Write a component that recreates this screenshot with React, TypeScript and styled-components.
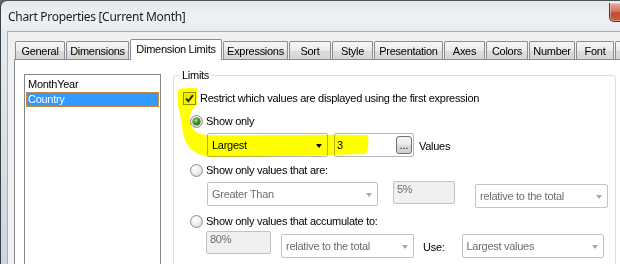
import React from 'react';
import styled, { createGlobalStyle } from 'styled-components';

const GlobalStyle = createGlobalStyle`
	html, body {
		margin: 0;
		padding: 0;
		background: #5f6b5c;
	}
	* {
		box-sizing: border-box;
	}
`;

const uiFont = `'Liberation Sans', Arial, sans-serif`;

interface TabDef {
	label: string;
	width: number;
	active?: boolean;
}

const tabs: TabDef[] = [
	{ label: 'General', width: 50 },
	{ label: 'Dimensions', width: 63 },
	{ label: 'Dimension Limits', width: 92, active: true },
	{ label: 'Expressions', width: 65 },
	{ label: 'Sort', width: 42 },
	{ label: 'Style', width: 41 },
	{ label: 'Presentation', width: 69 },
	{ label: 'Axes', width: 41 },
	{ label: 'Colors', width: 42 },
	{ label: 'Number', width: 46 },
	{ label: 'Font', width: 38 },
	{ label: '', width: 24 },
];

export default function App() {
	return (
		<>
			<GlobalStyle />
			<Window>
				<TitleBar>
					<Title>Chart Properties [Current Month]</Title>
					<CloseButton />
				</TitleBar>
				<Client>
					<TabStrip>
						{tabs.map((t, i) => (
							<Tab key={i} $width={t.width} $active={!!t.active}>
								{t.label}
							</Tab>
						))}
					</TabStrip>
					<Panel>
						<ListBox>
							<ListItem>MonthYear</ListItem>
							<ListItem $selected>Country</ListItem>
						</ListBox>
						<GroupBox>
							<Legend>Limits</Legend>
							<CheckRow>
								<CheckBox>
									<svg width="11" height="11" viewBox="0 0 11 11">
										<path d="M2 5.5 L4.3 8.2 L9 2.2" fill="none" stroke="#2b2b2b" strokeWidth="1.9" />
									</svg>
								</CheckBox>
								<Label>Restrict which values are displayed using the first expression</Label>
							</CheckRow>

							<RadioRow $mt={7}>
								<Radio $checked />
								<Label>Show only</Label>
							</RadioRow>
							<ControlRow $mt={4} $center>
								<Dropdown $width={121}>
									<span>Largest</span>
									<Arrow />
								</Dropdown>
								<EditBox $width={80} $ml={6}>
									<span>3</span>
									<DotsButton>...</DotsButton>
								</EditBox>
								<Label $ml={5} $dy={2}>Values</Label>
							</ControlRow>

							<RadioRow $mt={5}>
								<Radio />
								<Label>Show only values that are:</Label>
							</RadioRow>
							<ControlRow $mt={3}>
								<Dropdown $width={171} $disabled $dy={1}>
									<span>Greater Than</span>
									<Arrow $disabled />
								</Dropdown>
								<StaticEdit $width={62} $ml={15}>5%</StaticEdit>
								<Dropdown $width={133} $ml={20} $disabled $dy={3}>
									<span>relative to the total</span>
									<Arrow $disabled />
								</Dropdown>
							</ControlRow>

							<RadioRow $mt={5}>
								<Radio />
								<Label>Show only values that accumulate to:</Label>
							</RadioRow>
							<ControlRow $mt={2} $ml={23}>
								<StaticEdit $width={65}>80%</StaticEdit>
								<Dropdown $width={133} $ml={10} $disabled $dy={3}>
									<span>relative to the total</span>
									<Arrow $disabled />
								</Dropdown>
								<Label $ml={9} $dy={10}>Use:</Label>
								<Dropdown $width={142} $ml={17} $disabled $dy={3}>
									<span>Largest values</span>
									<Arrow $disabled />
								</Dropdown>
							</ControlRow>
						</GroupBox>
					</Panel>
				</Client>
				<Highlight viewBox="0 0 620 264" width="620" height="264">
					<path
						d="M178 90 C178 88 196 87 197 89 L197 104 C193 108 190 112 190 119 C190 127 194 133 204 135 C240 136 320 134 367 135 C369 140 369 148 366 154 C330 155 260 157 212 157 C196 156 187 148 184 137 C182 128 181 116 178 106 Z"
						fill="#ffff00"
					/>
				</Highlight>
			</Window>
		</>
	);
}

const Window = styled.div`
	position: relative;
	width: 620px;
	height: 264px;
	overflow: hidden;
	display: flex;
	flex-direction: column;
	border-top: 1px solid #4b5157;
	border-left: 1px solid #3a3f44;
	border-top-left-radius: 7px;
	background: linear-gradient(to bottom, #e4e9ee 0px, #eef1f4 18px, #e6ebf0 31px, #d9e1e8 140px, #ccd6df 264px);
`;

const TitleBar = styled.div`
	height: 30px;
	flex: none;
	display: flex;
	align-items: center;
	padding-left: 7px;
`;

const Title = styled.div`
	font-family: 'Noto Sans', 'Open Sans', sans-serif;
	font-size: 12px;
	letter-spacing: -0.3px;
	color: #1b1b1b;
`;

const CloseButton = styled.div`
	flex: none;
	align-self: flex-start;
	margin-left: auto;
	margin-right: -33px;
	margin-top: 2px;
	width: 44px;
	height: 19px;
	border: 1px solid #6b2e26;
	border-top: none;
	border-radius: 0 0 5px 5px;
	background: linear-gradient(to bottom, #e9a99a 0%, #d77562 45%, #c24a34 55%, #c8604a 100%);
	box-shadow: inset 0 0 0 1px rgba(255, 255, 255, 0.35);
`;

const Client = styled.div`
	flex: 1;
	margin-left: 6px;
	display: flex;
	flex-direction: column;
	background: #f0f0f0;
	border-top: 1px solid #a7b0ba;
	border-left: 1px solid #a7b0ba;
	padding: 7px 0 0 6px;
	overflow: hidden;
`;

const TabStrip = styled.div`
	position: relative;
	z-index: 1;
	display: flex;
	align-items: flex-end;
	gap: 1px;
	height: 21px;
	margin-bottom: -1px;
	padding-left: 1px;
	flex: none;
`;

const Tab = styled.div<{ $width: number; $active: boolean }>`
	flex: none;
	width: ${(p) => p.$width}px;
	height: ${(p) => (p.$active ? 21 : 18)}px;
	margin-bottom: ${(p) => (p.$active ? 0 : 1)}px;
	border: 1px solid #898c95;
	border-bottom: none;
	border-radius: 2px 2px 0 0;
	background: ${(p) =>
		p.$active ? '#ffffff' : 'linear-gradient(to bottom, #f6f6f6 0%, #ebebeb 50%, #dcdcdc 51%, #d6d6d6 100%)'};
	font-family: ${uiFont};
	font-size: 11px;
	letter-spacing: -0.28px;
	color: #000;
	display: flex;
	align-items: center;
	justify-content: center;
	white-space: nowrap;
	padding-bottom: ${(p) => (p.$active ? 2 : 0)}px;
`;

const Panel = styled.div`
	flex: 1;
	width: 640px;
	display: flex;
	align-items: flex-start;
	gap: 12px;
	padding: 9px 0 0 9px;
	background: #ffffff;
	border: 1px solid #898c95;
`;

const ListBox = styled.div`
	flex: none;
	width: 137px;
	height: 210px;
	margin-top: 5px;
	border: 1px solid #828790;
	padding: 2px 1px;
	font-family: ${uiFont};
	font-size: 11px;
	letter-spacing: -0.28px;
`;

const ListItem = styled.div<{ $selected?: boolean }>`
	height: 15px;
	line-height: 15px;
	padding-left: 2px;
	color: ${(p) => (p.$selected ? '#ffffff' : '#000000')};
	background: ${(p) => (p.$selected ? '#3399ff' : 'transparent')};
	outline: ${(p) => (p.$selected ? '1px dotted #d99a4a' : 'none')};
	outline-offset: -1px;
`;

const GroupBox = styled.fieldset`
	flex: none;
	width: 443px;
	height: 230px;
	margin: 0;
	padding: 0 0 0 9px;
	min-width: 0;
	border: 1px solid #d5dfe5;
	border-radius: 3px;
	display: flex;
	flex-direction: column;
	align-items: flex-start;
	font-family: ${uiFont};
	font-size: 11px;
	letter-spacing: -0.28px;
`;

const Legend = styled.legend`
	margin-left: -3px;
	padding: 0 2px;
	line-height: 13px;
	color: #000;
`;

const CheckRow = styled.div`
	display: flex;
	align-items: center;
	gap: 4px;
	height: 16px;
	margin-top: 8px;
`;

const CheckBox = styled.div`
	width: 13px;
	height: 13px;
	border: 1px solid #8e8f8f;
	background: linear-gradient(135deg, #dcdcdc 0%, #f6f6f6 60%, #ffffff 100%);
	box-shadow: inset 0 0 0 1px #f4f4f4;
	display: flex;
	align-items: center;
	justify-content: center;
`;

const RadioRow = styled.div<{ $mt: number }>`
	display: flex;
	align-items: center;
	gap: 3px;
	height: 16px;
	margin-left: 7px;
	margin-top: ${(p) => p.$mt}px;
`;

const Radio = styled.div<{ $checked?: boolean }>`
	width: 13px;
	height: 13px;
	border-radius: 50%;
	border: 1px solid #8f8f8f;
	background: radial-gradient(circle at 40% 35%, #ffffff 0%, #eeeeee 45%, #c9c9c9 100%);
	display: flex;
	align-items: center;
	justify-content: center;
	&::after {
		content: '';
		display: ${(p) => (p.$checked ? 'block' : 'none')};
		width: 7px;
		height: 7px;
		border-radius: 50%;
		background: radial-gradient(circle at 40% 35%, #b7ec8a 0%, #3f9e20 40%, #185c0c 85%);
		box-shadow: 0 0 0 0.5px #2a5a1a;
	}
`;

const Label = styled.span<{ $ml?: number; $dy?: number }>`
	flex: none;
	color: #000;
	white-space: nowrap;
	margin-left: ${(p) => p.$ml ?? 0}px;
	margin-top: ${(p) => p.$dy ?? 0}px;
`;

const ControlRow = styled.div<{ $mt: number; $ml?: number; $center?: boolean }>`
	display: flex;
	align-items: ${(p) => (p.$center ? 'center' : 'flex-start')};
	margin-left: ${(p) => p.$ml ?? 24}px;
	margin-top: ${(p) => p.$mt}px;
`;

const Dropdown = styled.div<{ $width: number; $ml?: number; $dy?: number; $disabled?: boolean }>`
	flex: none;
	width: ${(p) => p.$width}px;
	height: 24px;
	margin-left: ${(p) => p.$ml ?? 0}px;
	margin-top: ${(p) => p.$dy ?? 0}px;
	border: 1px solid ${(p) => (p.$disabled ? '#c2c2c2' : '#b5b5b5')};
	border-radius: 2px;
	background: #ffffff;
	color: ${(p) => (p.$disabled ? '#6d6d6d' : '#000000')};
	display: flex;
	align-items: center;
	justify-content: space-between;
	padding: 0 5px 0 4px;
	white-space: nowrap;
`;

const Arrow = styled.span<{ $disabled?: boolean }>`
	width: 0;
	height: 0;
	border-left: 3.5px solid transparent;
	border-right: 3.5px solid transparent;
	border-top: 4px solid ${(p) => (p.$disabled ? '#a8a8a8' : '#000000')};
	margin-top: 1px;
`;

const EditBox = styled.div<{ $width: number; $ml?: number }>`
	flex: none;
	width: ${(p) => p.$width}px;
	height: 24px;
	margin-left: ${(p) => p.$ml ?? 0}px;
	border: 1px solid #b5b5b5;
	border-radius: 2px;
	background: #ffffff;
	display: flex;
	align-items: center;
	justify-content: space-between;
	padding: 0 1px 0 2px;
`;

const DotsButton = styled.div`
	width: 16px;
	height: 18px;
	margin-top: -1px;
	border: 1px solid #707070;
	border-radius: 3px;
	background: linear-gradient(to bottom, #f4f4f4 0%, #e9e9e9 50%, #dcdcdc 51%, #d0d0d0 100%);
	font-size: 10px;
	letter-spacing: 0;
	line-height: 18px;
	text-align: center;
	color: #000;
`;

const StaticEdit = styled.div<{ $width: number; $ml?: number }>`
	flex: none;
	width: ${(p) => p.$width}px;
	height: 23px;
	margin-left: ${(p) => p.$ml ?? 0}px;
	border: 1px solid #c2c2c2;
	border-radius: 2px;
	background: #f0f0f0;
	color: #6d6d6d;
	padding: 1px 3px;
	line-height: 13px;
`;

const Highlight = styled.svg`
	position: absolute;
	left: -1px;
	top: -1px;
	pointer-events: none;
	mix-blend-mode: multiply;
`;
